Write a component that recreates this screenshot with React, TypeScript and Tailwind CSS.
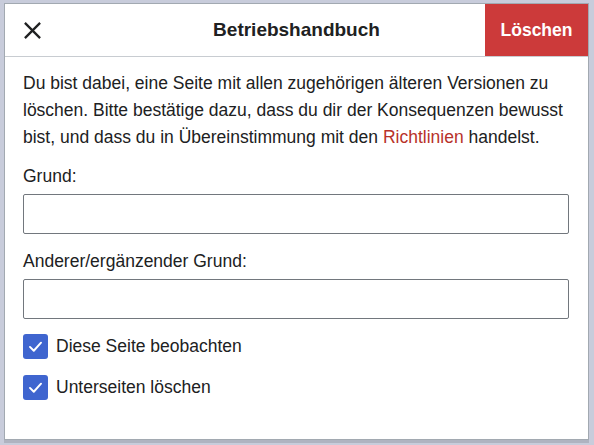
import { useState } from "react";

function CheckRow({ label }: { label: string }) {
  const [checked, setChecked] = useState(true);
  return (
    <label className="flex items-center gap-[8px] h-[25px] cursor-pointer">
      <button
        onClick={() => setChecked(!checked)}
        className={`w-[25px] h-[25px] rounded-[3px] flex items-center justify-center ${
          checked ? "bg-[#3f65cf]" : "bg-white border border-[#72777d]"
        }`}
      >
        {checked && (
          <svg width="17" height="17" viewBox="0 0 20 20" fill="none">
            <path
              d="M3.5 10.5l4.5 4.5 8.5-9.5"
              stroke="#fff"
              strokeWidth="2.3"
              strokeLinecap="round"
              strokeLinejoin="round"
            />
          </svg>
        )}
      </button>
      <span className="text-[17.5px] text-[#202122]">{label}</span>
    </label>
  );
}

export default function App() {
  return (
    <div
      className="w-[594px] h-[445px] bg-[#c8ccdb] pl-[4px] pt-[3px] overflow-hidden"
      style={{ fontFamily: '"Liberation Sans", Arial, sans-serif' }}
    >
      <div className="w-[585px] h-[437px] bg-white border border-[#a2a9b1] shadow-[0_3px_0_rgba(0,0,0,0.12)] flex flex-col">
        {/* header */}
        <div className="flex items-stretch h-[53px] border-b border-[#c8ccd1]">
          <button className="w-[53px] flex items-center justify-center pl-[2px]">
            <svg width="19" height="19" viewBox="0 0 20 20">
              <path
                d="M2 2l16 16M18 2L2 18"
                stroke="#202122"
                strokeWidth="2.4"
              />
            </svg>
          </button>
          <div className="flex-1 flex items-center justify-center pl-[50px] text-[19px] font-bold text-[#202122]">
            Betriebshandbuch
          </div>
          <button className="w-[103px] bg-[#cc3a3a] text-white font-bold text-[17.5px] flex items-center justify-center">
            Löschen
          </button>
        </div>

        {/* body */}
        <div className="px-[18px] pt-[13px] flex flex-col">
          <p className="text-[17.5px] leading-[27px] text-[#202122]">
            Du bist dabei, eine Seite mit allen zugehörigen älteren Versionen zu
            löschen. Bitte bestätige dazu, dass du dir der Konsequenzen bewusst
            bist, und dass du in Übereinstimmung mit den{" "}
            <a className="text-[#b8322a]">Richtlinien</a> handelst.
          </p>

          <div className="mt-[12px] text-[17.5px] text-[#202122] leading-[27px]">Grund:</div>
          <input className="mt-[4px] w-[546px] h-[40px] border border-[#72777d] rounded-[2px] px-[8px] text-[17px] outline-none" />

          <div className="mt-[14px] text-[17.5px] text-[#202122] leading-[27px]">
            Anderer/ergänzender Grund:
          </div>
          <input className="mt-[4px] w-[546px] h-[40px] border border-[#72777d] rounded-[2px] px-[8px] text-[17px] outline-none" />

          <div className="mt-[15px] flex flex-col gap-[16px]">
            <CheckRow label="Diese Seite beobachten" />
            <CheckRow label="Unterseiten löschen" />
          </div>
        </div>
      </div>
    </div>
  );
}
